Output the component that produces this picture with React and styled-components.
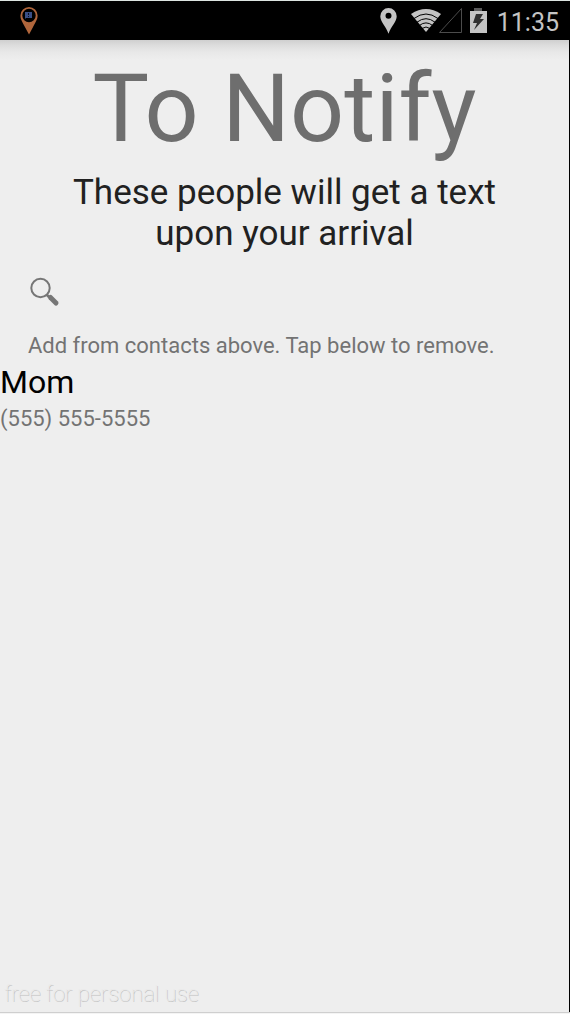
import React, { useState } from "react";
import styled, { createGlobalStyle } from "styled-components";

const GlobalStyle = createGlobalStyle`
  *, *::before, *::after { box-sizing: border-box; }
  body {
    margin: 0;
    background: #eee;
    font-family: Roboto, "Liberation Sans", sans-serif;
  }
`;

const Screen = styled.div`
  display: flex;
  flex-direction: column;
  min-height: 100vh;
  padding-bottom: 1px;
  border-top: 1px solid #dde5e1;
  border-bottom: 1px solid #f4f4f4;
  background: #cfcfcf;
`;

const Device = styled.div`
  display: flex;
  flex: 1;
  flex-direction: column;
  border-right: 1px solid #000;
`;

const StatusBar = styled.header`
  display: flex;
  align-items: center;
  justify-content: space-between;
  height: 39px;
  padding: 0 10px 0 20px;
  background: #000;
  color: #c4c4c4;

  svg { display: block; }
`;

const StatusIcons = styled.div`
  display: flex;
  align-items: center;
`;

const Icon = styled.svg`
  margin-right: ${({ $gap }) => $gap || 0}px;
`;

const Clock = styled.time`
  padding-top: 4px;
  font-size: 25px;
  line-height: 30px;
`;

const Content = styled.main`
  display: flex;
  flex: 1;
  flex-direction: column;
  background: linear-gradient(#cfcfcf 0, #dedede 6px, #e8e8e8 12px, #eee 20px);
`;

const Title = styled.h1`
  margin: 0;
  padding-top: 13px;
  color: #6e6e6e;
  font-size: 95px;
  font-weight: 400;
  line-height: 112px;
  text-align: center;
`;

const Subtitle = styled.p`
  margin: 7px 60px 0;
  color: #212121;
  font-size: 35px;
  line-height: 41px;
  text-align: center;
`;

const SearchField = styled.label`
  display: flex;
  align-items: center;
  height: 48px;
  margin: 14px 28px 0;
`;

const SearchInput = styled.input`
  flex: 1;
  min-width: 0;
  margin-left: 8px;
  border: 0;
  outline: 0;
  background: transparent;
  color: #212121;
  font: inherit;
  font-size: 22px;
`;

const Hint = styled.p`
  margin: 15px 28px 0;
  color: #737373;
  font-size: 22px;
  line-height: 30px;
`;

const ContactList = styled.ul`
  flex: 1;
  margin: 0;
  padding: 0;
  list-style: none;
`;

const ContactButton = styled.button`
  display: block;
  width: 100%;
  padding: 2px 0;
  border: 0;
  background: transparent;
  font-family: inherit;
  text-align: left;
  cursor: pointer;
`;

const ContactName = styled.span`
  display: block;
  color: #000;
  font-size: 32px;
  line-height: 38px;
`;

const ContactPhone = styled.span`
  display: block;
  color: #737373;
  font-size: 22px;
  line-height: 36px;
`;

const Footnote = styled.footer`
  padding: 0 4px 4px;
  color: #e9e9e9;
  font-size: 22px;
  font-weight: 100;
  line-height: 28px;
  text-shadow: 1px 1px 0 #c0c0c0;
`;

function AppPin() {
  return (
    <Icon width="18" height="28" viewBox="0 0 18 28" aria-hidden="true">
      <path
        fill="#b0663c"
        fillRule="evenodd"
        d="M9 0a8.6 8.6 0 0 1 8.6 8.6c0 4.5-2.8 7.6-4.8 12L9 27.4l-3.8-6.800C3.200 16.200.4 13.100.4 8.600A8.600 8.600 0 0 1 9 0zm0 1.800a6.700 6.700 0 1 0 0 13.400 6.700 6.700 0 0 0 0-13.400z"
      />
      <path fill="#3a4f86" d="M5 5h7v6H6l-1 1z" />
      <path fill="#0c1226" d="M8 6h1v2H8zM8 9h1v1H8z" />
    </Icon>
  );
}

function LocationPin() {
  return (
    <Icon $gap={14} width="17" height="26" viewBox="0 0 17 26" aria-hidden="true">
      <path
        fill="#c4c4c4"
        fillRule="evenodd"
        d="M8.500 0A8.200 8.200 0 0 1 16.700 8.200c0 5.800-5.500 9.500-8.200 17.600C5.800 17.700.3 14 .3 8.200A8.200 8.200 0 0 1 8.500 0zm0 4.700a3 3 0 1 0 0 6 3 3 0 0 0 0-6z"
      />
    </Icon>
  );
}

function Signal() {
  return (
    <Icon $gap={6} width="52" height="26" viewBox="0 0 52 26" aria-hidden="true">
      <path fill="#c4c4c4" d="M0 6Q15-4 30 6L15 24z" />
      <g fill="none" stroke="#000" strokeWidth="1">
        <path d="M3 10.500Q15 1.500 27 10.500" />
        <path d="M6 14.200Q15 7.200 24 14.200" />
        <path d="M8.500 17.400Q15 12.400 21.500 17.400" />
        <path d="M11 20.500Q15 17.500 19 20.500" />
      </g>
      <path fill="none" stroke="#4c4c4c" d="M50.500.500v24h-22z" />
    </Icon>
  );
}

function Battery() {
  return (
    <Icon $gap={10} width="18" height="26" viewBox="0 0 18 26" aria-hidden="true">
      <path fill="#5c5c5c" d="M5 0h8v4H5z" />
      <path fill="#c4c4c4" d="M1 3h17v22H1z" />
      <path fill="#303030" d="M7 6h7l-3 5h4L5 22l3-7H4z" />
    </Icon>
  );
}

function Magnifier() {
  return (
    <Icon width="32" height="32" viewBox="0 0 32 32" aria-hidden="true">
      <circle cx="12.500" cy="12" r="9.200" fill="none" stroke="#767676" strokeWidth="2" />
      <path d="M18.500 18.500l3 3" stroke="#767676" strokeWidth="2.500" />
      <path d="M22.500 21.500l5.500 5.500" stroke="#767676" strokeWidth="5" strokeLinecap="round" />
    </Icon>
  );
}

export default function App() {
  const [contacts, setContacts] = useState([{ name: "Mom", phone: "(555) 555-5555" }]);
  const remove = (phone) => setContacts((list) => list.filter((c) => c.phone !== phone));

  return (
    <Screen>
      <GlobalStyle />
      <Device>
        <StatusBar>
          <AppPin />
          <StatusIcons>
            <LocationPin />
            <Signal />
            <Battery />
            <Clock dateTime="11:35">11:35</Clock>
          </StatusIcons>
        </StatusBar>
        <Content>
          <Title>To Notify</Title>
          <Subtitle>These people will get a text upon your arrival</Subtitle>
          <SearchField>
            <Magnifier />
            <SearchInput type="search" aria-label="Search contacts" />
          </SearchField>
          <Hint>Add from contacts above. Tap below to remove.</Hint>
          <ContactList>
            {contacts.map(({ name, phone }) => (
              <li key={phone}>
                <ContactButton type="button" onClick={() => remove(phone)}>
                  <ContactName>{name}</ContactName>
                  <ContactPhone>{phone}</ContactPhone>
                </ContactButton>
              </li>
            ))}
          </ContactList>
          <Footnote>free for personal use</Footnote>
        </Content>
      </Device>
    </Screen>
  );
}
